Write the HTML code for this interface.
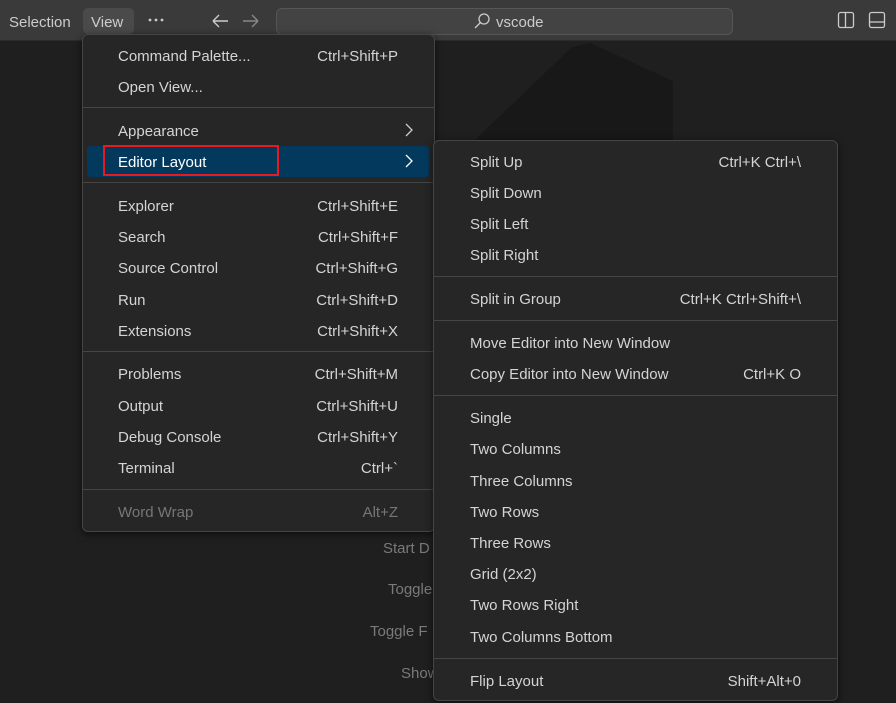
<!DOCTYPE html>
<html><head><style>
*{margin:0;padding:0;box-sizing:border-box}
body{width:896px;height:703px;overflow:hidden;background:#1f1f1f;font-family:"Liberation Sans",sans-serif;font-size:15px;color:#ccc;position:relative}
.tb{position:absolute;left:0;top:0;width:896px;height:41px;background:#3a3a3a;border-bottom:1px solid #2b2b2b}
.t{position:absolute;white-space:nowrap}
.menu{position:absolute;background:#262626;border:1px solid #454545;border-radius:6px;box-shadow:0 2px 8px rgba(0,0,0,.6)}
.it{position:absolute;white-space:nowrap;color:#d4d4d4}
.sep{position:absolute;height:1px;background:#454545}
.bg{position:absolute;color:#7a7a7a;white-space:nowrap;font-size:15px}
.chev{position:absolute}
</style></head><body>
<div class="tb"></div>
<div class="t" style="left:9px;top:14px;color:#ccc">Selection</div>
<div style="position:absolute;left:83px;top:8px;width:51px;height:26px;background:#4a4a4a;border-radius:5px"></div>
<div class="t" style="left:91px;top:14px;color:#ccc">View</div>
<svg style="position:absolute;left:147px;top:17px" width="20" height="6"><circle cx="3" cy="3" r="1.4" fill="#ccc"/><circle cx="9" cy="3" r="1.4" fill="#ccc"/><circle cx="15" cy="3" r="1.4" fill="#ccc"/></svg>
<svg style="position:absolute;left:210px;top:12px" width="50" height="18"><path d="M3 9H18M3 9L9 3M3 9L9 15" fill="none" stroke="#ccc" stroke-width="1.4"/><path d="M48 9H33M48 9L42 3M48 9L42 15" fill="none" stroke="#888" stroke-width="1.4"/></svg>
<div style="position:absolute;left:276px;top:8px;width:457px;height:27px;background:#434343;border:1px solid #555;border-radius:6px"></div>
<svg style="position:absolute;left:473px;top:12px" width="18" height="18"><circle cx="11" cy="7" r="5" fill="none" stroke="#ccc" stroke-width="1.3"/><line x1="7.5" y1="10.5" x2="2" y2="16" stroke="#ccc" stroke-width="1.3"/></svg>
<div class="t" style="left:496px;top:14px;color:#ccc">vscode</div>
<svg style="position:absolute;left:837px;top:11px" width="50" height="20"><rect x="1.5" y="1.5" width="15" height="15" rx="2" fill="none" stroke="#ccc" stroke-width="1.3"/><line x1="8.5" y1="2" x2="8.5" y2="16" stroke="#ccc" stroke-width="1.3"/><rect x="32.5" y="1.5" width="15" height="15" rx="2" fill="none" stroke="#ccc" stroke-width="1.3"/><line x1="33" y1="11" x2="47" y2="11" stroke="#ccc" stroke-width="1.3"/></svg>
<svg style="position:absolute;left:0;top:0" width="896" height="703"><polygon points="475,140 572,47 590,43 673,81 673,140" fill="#181818"/></svg>
<div class="bg" style="left:383px;top:540px">Start D</div>
<div class="bg" style="left:388px;top:581px">Toggle</div>
<div class="bg" style="left:370px;top:623px">Toggle F</div>
<div class="bg" style="left:401px;top:665px">Show</div>

<div class="menu" style="left:82px;top:34px;width:353px;height:498px"></div>
<div style="position:absolute;left:87px;top:146px;width:342px;height:31px;background:#04395e;border-radius:4px"></div>
<div style="position:absolute;left:103px;top:145px;width:176px;height:31px;border:2px solid #e8191f"></div>
<div class="sep" style="left:83px;top:107px;width:351px"></div>
<div class="sep" style="left:83px;top:182px;width:351px"></div>
<div class="sep" style="left:83px;top:351px;width:351px"></div>
<div class="sep" style="left:83px;top:489px;width:351px"></div>
<div class="it" style="left:118px;top:48px">Command Palette...</div><div class="it" style="right:498px;top:48px">Ctrl+Shift+P</div>
<div class="it" style="left:118px;top:79px">Open View...</div>
<div class="it" style="left:118px;top:123px">Appearance</div>
<svg class="chev" style="left:404px;top:123px" width="10" height="14"><path d="M2 1L8 7L2 13" fill="none" stroke="#ccc" stroke-width="1.3"/></svg>
<div class="it" style="left:118px;top:154px;color:#fff">Editor Layout</div>
<svg class="chev" style="left:404px;top:154px" width="10" height="14"><path d="M2 1L8 7L2 13" fill="none" stroke="#fff" stroke-width="1.3"/></svg>
<div class="it" style="left:118px;top:198px">Explorer</div><div class="it" style="right:498px;top:198px">Ctrl+Shift+E</div>
<div class="it" style="left:118px;top:229px">Search</div><div class="it" style="right:498px;top:229px">Ctrl+Shift+F</div>
<div class="it" style="left:118px;top:260px">Source Control</div><div class="it" style="right:498px;top:260px">Ctrl+Shift+G</div>
<div class="it" style="left:118px;top:292px">Run</div><div class="it" style="right:498px;top:292px">Ctrl+Shift+D</div>
<div class="it" style="left:118px;top:323px">Extensions</div><div class="it" style="right:498px;top:323px">Ctrl+Shift+X</div>
<div class="it" style="left:118px;top:366px">Problems</div><div class="it" style="right:498px;top:366px">Ctrl+Shift+M</div>
<div class="it" style="left:118px;top:398px">Output</div><div class="it" style="right:498px;top:398px">Ctrl+Shift+U</div>
<div class="it" style="left:118px;top:429px">Debug Console</div><div class="it" style="right:498px;top:429px">Ctrl+Shift+Y</div>
<div class="it" style="left:118px;top:460px">Terminal</div><div class="it" style="right:498px;top:460px">Ctrl+`</div>
<div class="it" style="left:118px;top:504px;color:#767676">Word Wrap</div><div class="it" style="right:498px;top:504px;color:#767676">Alt+Z</div>

<div class="menu" style="left:433px;top:140px;width:405px;height:561px"></div>
<div class="sep" style="left:434px;top:276px;width:403px"></div>
<div class="sep" style="left:434px;top:320px;width:403px"></div>
<div class="sep" style="left:434px;top:395px;width:403px"></div>
<div class="sep" style="left:434px;top:658px;width:403px"></div>
<div class="it" style="left:470px;top:154px">Split Up</div><div class="it" style="right:95px;top:154px">Ctrl+K Ctrl+\</div>
<div class="it" style="left:470px;top:185px">Split Down</div>
<div class="it" style="left:470px;top:216px">Split Left</div>
<div class="it" style="left:470px;top:247px">Split Right</div>
<div class="it" style="left:470px;top:291px">Split in Group</div><div class="it" style="right:95px;top:291px">Ctrl+K Ctrl+Shift+\</div>
<div class="it" style="left:470px;top:335px">Move Editor into New Window</div>
<div class="it" style="left:470px;top:366px">Copy Editor into New Window</div><div class="it" style="right:95px;top:366px">Ctrl+K O</div>
<div class="it" style="left:470px;top:410px">Single</div>
<div class="it" style="left:470px;top:441px">Two Columns</div>
<div class="it" style="left:470px;top:473px">Three Columns</div>
<div class="it" style="left:470px;top:504px">Two Rows</div>
<div class="it" style="left:470px;top:535px">Three Rows</div>
<div class="it" style="left:470px;top:566px">Grid (2x2)</div>
<div class="it" style="left:470px;top:597px">Two Rows Right</div>
<div class="it" style="left:470px;top:629px">Two Columns Bottom</div>
<div class="it" style="left:470px;top:673px">Flip Layout</div><div class="it" style="right:95px;top:673px">Shift+Alt+0</div>
</body></html>
